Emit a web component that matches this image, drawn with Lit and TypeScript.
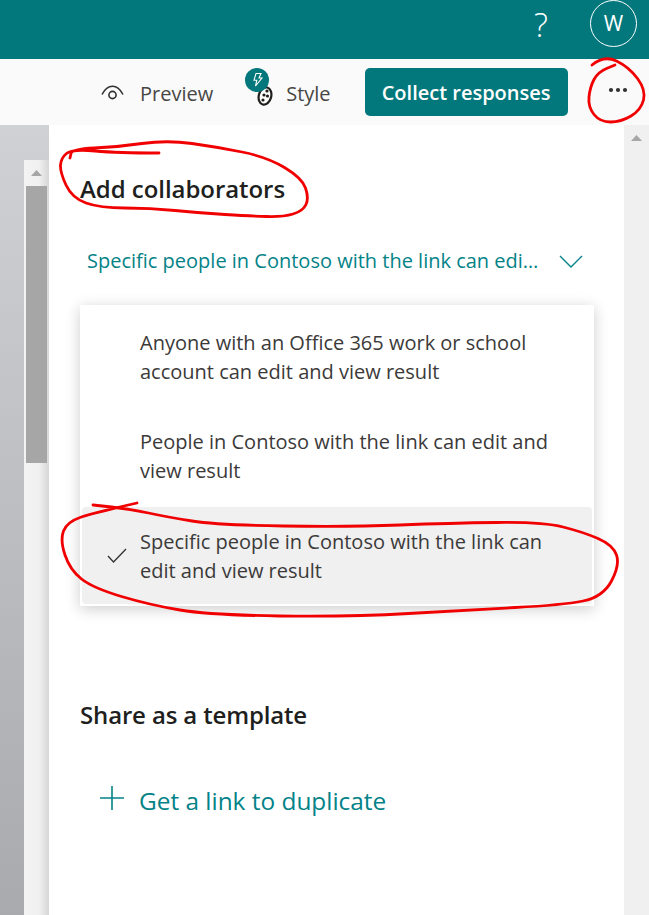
import { LitElement, html, css, svg } from 'lit';
import { customElement } from 'lit/decorators.js';

type Pt = [number, number];

// hand-drawn annotations, traced from the reference
const SCRIBBLES: Pt[][] = [
  [[159, 153], [118, 153], [72, 149], [61, 158], [60, 172], [72, 198], [100, 208], [150, 208], [200, 213], [250, 216], [283, 217], [303, 211], [309, 198], [302, 178], [267, 157], [217, 147], [167, 140], [117, 147], [72, 149], [70, 158]],
  [[592, 65], [604, 55], [629, 67], [646, 90], [641, 110], [621, 122], [600, 122], [588, 107], [590, 87], [598, 72], [615, 65]],
  [[137, 503], [93, 513], [67, 522], [60, 540], [70, 570], [93, 588], [150, 605], [210, 615], [350, 617], [467, 610], [563, 605], [603, 597], [620, 565], [613, 545], [583, 532], [543, 522], [450, 523], [350, 527], [217, 525], [167, 517], [130, 509], [93, 505]],
];

function smooth(pts: Pt[]) {
  let d = `M${pts[0][0]} ${pts[0][1]}`;
  for (let i = 1; i < pts.length - 1; i++) {
    const mx = (pts[i][0] + pts[i + 1][0]) / 2;
    const my = (pts[i][1] + pts[i + 1][1]) / 2;
    d += ` Q${pts[i][0]} ${pts[i][1]} ${mx} ${my}`;
  }
  const last = pts[pts.length - 1];
  return `${d} L${last[0]} ${last[1]}`;
}

@customElement('app-root')
export class AppRoot extends LitElement {
  static styles = css`
    :host {
      display: block;
      position: relative;
      width: 649px;
      height: 915px;
      overflow: hidden;
      font-family: 'Open Sans', 'Noto Sans', sans-serif;
      color: #323130;
      background: #fff;
    }

    .topbar {
      height: 59px;
      background: #03787c;
      color: #fff;
      display: flex;
      align-items: center;
      justify-content: flex-end;
      padding-right: 12px;
      box-sizing: border-box;
    }

    .help {
      font-size: 33px;
      font-weight: 300;
      margin-right: 42px;
      line-height: 1;
      margin-bottom: 11px;
    }

    .avatar {
      width: 47px;
      height: 47px;
      border-radius: 50%;
      border: 1px solid #fff;
      box-sizing: border-box;
      display: flex;
      align-items: center;
      justify-content: center;
      font-size: 21px;
      margin-bottom: 13px;
    }

    .toolbar {
      height: 66px;
      background: #fafafa;
      display: flex;
      align-items: center;
      padding-left: 101px;
      box-sizing: border-box;
      font-size: 20px;
    }

    .tool {
      display: flex;
      align-items: center;
      color: #484644;
      margin-top: 2px;
    }

    .preview svg {
      margin-right: 16px;
    }

    .style {
      margin-left: 32px;
      position: relative;
    }

    .style .palette {
      margin-right: 13px;
    }

    .badge {
      position: absolute;
      left: 0;
      top: -11px;
      width: 24px;
      height: 24px;
    }

    .collect {
      margin-left: 34px;
      width: 203px;
      height: 48px;
      border-radius: 5px;
      background: #03787c;
      color: #fff;
      display: flex;
      align-items: center;
      justify-content: center;
      font-weight: 600;
      font-size: 20px;
    }

    .more {
      margin-left: 40px;
      margin-top: 2px;
      margin-bottom: 6px;
      display: flex;
    }

    .body {
      display: flex;
      height: 790px;
    }

    .gutter {
      width: 49px;
      padding: 35px 0 0 24px;
      box-sizing: border-box;
      background: linear-gradient(180deg, #d0d1d4 0%, #a9aaae 100%);
      flex-shrink: 0;
    }

    .vbar {
      height: 100%;
      width: 25px;
      background: linear-gradient(90deg, #f3f3f3 0%, #f0f0f0 60%, #d6d6d6 100%);
    }

    .up {
      height: 26px;
      display: flex;
      align-items: center;
      justify-content: center;
    }

    .thumb {
      margin-left: 2px;
      width: 21px;
      height: 277px;
      background: #a6a6a6;
    }

    .panel {
      flex: 1;
      min-width: 0;
      padding: 49px 0 0 31px;
      box-sizing: border-box;
    }

    .title {
      margin: 0;
      font-size: 24px;
      line-height: 30px;
      font-weight: 600;
      letter-spacing: -0.05px;
      color: #201f1e;
    }

    .picker {
      margin: 42px 0 0 7px;
      width: 496px;
      display: flex;
      align-items: center;
      justify-content: space-between;
      color: #038387;
      font-size: 20px;
      line-height: 30px;
    }

    .picker span {
      width: 456px;
      white-space: nowrap;
      overflow: hidden;
      text-overflow: ellipsis;
    }

    .menu {
      margin-top: 29px;
      width: 514px;
      box-sizing: border-box;
      padding: 4px 2px 2px;
      display: flex;
      flex-direction: column;
      gap: 3px;
      background: #fff;
      box-shadow: 0 3px 14px rgba(0, 0, 0, 0.2);
    }

    .item {
      height: 96px;
      display: flex;
      align-items: center;
      border-radius: 4px;
      font-size: 20px;
      line-height: 29px;
      color: #3b3a39;
    }

    .item.selected {
      height: 97px;
      background: #f0f0f0;
    }

    .check {
      width: 58px;
      flex-shrink: 0;
      display: flex;
      justify-content: center;
      padding-left: 12px;
      box-sizing: border-box;
    }

    .item p {
      margin: 0;
      width: 420px;
    }

    .share {
      margin-top: 94px;
      letter-spacing: -0.15px;
    }

    .dup {
      margin: 55px 0 0 20px;
      display: flex;
      align-items: center;
      color: #038387;
      font-size: 24.4px;
      line-height: 30px;
    }

    .dup svg {
      margin: 0 14px 6px -1px;
    }

    .rbar {
      width: 25px;
      background: #f0f0f0;
      flex-shrink: 0;
    }

    .ink {
      position: absolute;
      left: 0;
      top: 0;
      pointer-events: none;
    }
  `;

  render() {
    return html`
      <div class="topbar">
        <div class="help">?</div>
        <div class="avatar">W</div>
      </div>
      <div class="toolbar">
        <div class="tool preview">
          <svg width="23" height="16" viewBox="0 0 23 16" fill="none" stroke="#323130" stroke-width="1.6">
            <path d="M1 9.5C4 3.5 7.5 1.2 11.5 1.2S19 3.5 22 9.5" />
            <circle cx="11.5" cy="10" r="3.6" />
          </svg>
          Preview
        </div>
        <div class="tool style">
          <svg class="palette" width="28" height="28" viewBox="0 0 28 28" fill="none">
            <ellipse cx="20" cy="17" rx="6.2" ry="8.8" transform="rotate(15 20 17)" stroke="#201f1e" stroke-width="2.2" fill="#fff" />
            <circle cx="22" cy="12" r="1.6" fill="#201f1e" />
            <circle cx="19" cy="16" r="1.6" fill="#201f1e" />
            <circle cx="22.5" cy="17" r="1.6" fill="#201f1e" />
            <circle cx="18" cy="21" r="1.6" fill="#201f1e" />
          </svg>
          <svg class="badge" viewBox="0 0 24 24">
            <circle cx="12" cy="12" r="12" fill="#03787c" />
            <path d="M11 5.5h5l-2 4.5h3l-6.5 8 1.3-5.8H9z" fill="none" stroke="#fff" stroke-width="1.1" />
          </svg>
          Style
        </div>
        <div class="collect">Collect responses</div>
        <svg class="more" width="20" height="6" viewBox="0 0 20 6" fill="#323130">
          <circle cx="3" cy="3" r="2.1" />
          <circle cx="10" cy="3" r="2.1" />
          <circle cx="17" cy="3" r="2.1" />
        </svg>
      </div>
      <div class="body">
        <div class="gutter">
          <div class="vbar">
            <div class="up">
              <svg width="11" height="6" viewBox="0 0 11 6"><path d="M5.5 0L11 6H0z" fill="#a6a6a6" /></svg>
            </div>
            <div class="thumb"></div>
          </div>
        </div>
        <div class="panel">
          <h2 class="title">Add collaborators</h2>
          <div class="picker">
            <span>Specific people in Contoso with the link can edit and view result</span>
            <svg width="24" height="13" viewBox="0 0 24 13" fill="none" stroke="#038387" stroke-width="1.4">
              <path d="M1 1l11 11L23 1" />
            </svg>
          </div>
          <div class="menu">
            <div class="item">
              <div class="check"></div>
              <p>Anyone with an Office 365 work or school account can edit and view result</p>
            </div>
            <div class="item">
              <div class="check"></div>
              <p>People in Contoso with the link can edit and view result</p>
            </div>
            <div class="item selected">
              <div class="check">
                <svg width="20" height="15" viewBox="0 0 20 15" fill="none" stroke="#323130" stroke-width="1.3">
                  <path d="M1 8l5.5 6L19 1" />
                </svg>
              </div>
              <p>Specific people in Contoso with the link can edit and view result</p>
            </div>
          </div>
          <h2 class="title share">Share as a template</h2>
          <div class="dup">
            <svg width="26" height="26" viewBox="0 0 26 26" fill="none" stroke="#038387" stroke-width="1.6">
              <path d="M1 13h24M13 1v24" />
            </svg>
            Get a link to duplicate
          </div>
        </div>
        <div class="rbar">
          <div class="up">
            <svg width="11" height="6" viewBox="0 0 11 6"><path d="M5.5 0L11 6H0z" fill="#a6a6a6" /></svg>
          </div>
        </div>
      </div>
      <svg class="ink" width="649" height="915" fill="none" stroke="#f00000" stroke-width="2.8" stroke-linecap="round" stroke-linejoin="round">
        ${SCRIBBLES.map((pts) => svg`<path d=${smooth(pts)} />`)}
      </svg>
    `;
  }
}
